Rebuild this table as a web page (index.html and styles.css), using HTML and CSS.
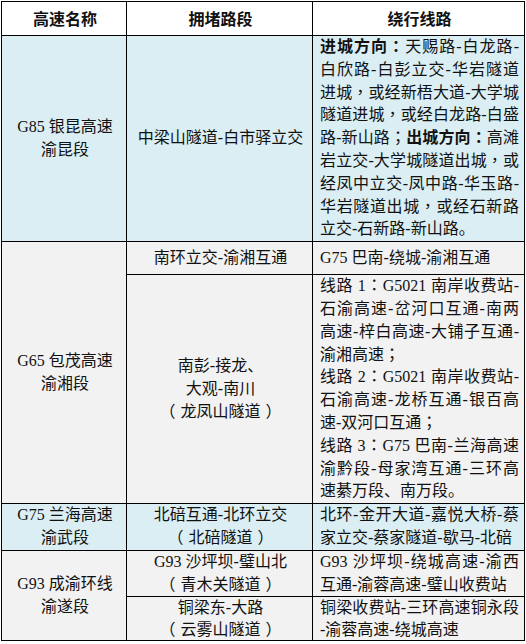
FILE: index.html
```html
<!DOCTYPE html>
<html lang="zh-CN">
<head>
<meta charset="utf-8">
<title>绕行线路</title>
<link rel="stylesheet" href="styles.css">
</head>
<body>
<table class="roads">
  <colgroup><col class="c1"><col class="c2"><col class="c3"></colgroup>
  <thead>
    <tr class="head"><th>高速名称</th><th>拥堵路段</th><th>绕行线路</th></tr>
  </thead>
  <tbody>
    <tr class="blue">
      <td class="name">G85 银昆高速<br>渝昆段</td>
      <td class="seg">中梁山隧道-白市驿立交</td>
      <td class="route">
        <span class="ln j"><b>进城方向<span class="p" lang="zh-TW">：</span></b>天赐路-白龙路-</span>
        <span class="ln j">白欣路-白彭立交-华岩隧道</span>
        <span class="ln j">进城<span class="p" lang="zh-TW">，</span>或经新梧大道-大学城</span>
        <span class="ln j">隧道进城<span class="p" lang="zh-TW">，</span>或经白龙路-白盛</span>
        <span class="ln j">路-新山路<span class="p" lang="zh-TW">；</span><b>出城方向<span class="p" lang="zh-TW">：</span></b>高滩</span>
        <span class="ln j">岩立交-大学城隧道出城<span class="p" lang="zh-TW">，</span>或</span>
        <span class="ln j">经凤中立交-凤中路-华玉路-</span>
        <span class="ln j">华岩隧道出城<span class="p" lang="zh-TW">，</span>或经石新路</span>
        <span class="ln">立交-石新路-新山路。</span>
      </td>
    </tr>
    <tr class="gray one">
      <td class="name" rowspan="2">G65 包茂高速<br>渝湘段</td>
      <td class="seg">南环立交-渝湘互通</td>
      <td class="route"><span class="ln">G75 巴南-绕城-渝湘互通</span></td>
    </tr>
    <tr class="gray">
      <td class="seg">南彭-接龙、<br>大观-南川<br><span class="op">（</span>龙凤山隧道<span class="cp">）</span></td>
      <td class="route">
        <span class="ln j">线路 1<span class="p" lang="zh-TW">：</span>G5021 南岸收费站-</span>
        <span class="ln j">石渝高速-岔河口互通-南两</span>
        <span class="ln j">高速-梓白高速-大铺子互通-</span>
        <span class="ln">渝湘高速<span class="p" lang="zh-TW">；</span></span>
        <span class="ln j">线路 2<span class="p" lang="zh-TW">：</span>G5021 南岸收费站-</span>
        <span class="ln j">石渝高速-龙桥互通-银百高</span>
        <span class="ln">速-双河口互通<span class="p" lang="zh-TW">；</span></span>
        <span class="ln j">线路 3<span class="p" lang="zh-TW">：</span>G75 巴南-兰海高速</span>
        <span class="ln j">渝黔段-母家湾互通-三环高</span>
        <span class="ln">速綦万段、南万段。</span>
      </td>
    </tr>
    <tr class="blue">
      <td class="name">G75 兰海高速<br>渝武段</td>
      <td class="seg">北碚互通-北环立交<br><span class="op">（</span>北碚隧道<span class="cp">）</span></td>
      <td class="route">
        <span class="ln j">北环-金开大道-嘉悦大桥-蔡</span>
        <span class="ln">家立交-蔡家隧道-歇马-北碚</span>
      </td>
    </tr>
    <tr class="gray">
      <td class="name" rowspan="2">G93 成渝环线<br>渝遂段</td>
      <td class="seg">G93 沙坪坝-璧山北<br><span class="op">（</span>青木关隧道<span class="cp">）</span></td>
      <td class="route">
        <span class="ln j">G93 沙坪坝-绕城高速-渝西</span>
        <span class="ln">互通-渝蓉高速-璧山收费站</span>
      </td>
    </tr>
    <tr class="gray last">
      <td class="seg">铜梁东-大路<br><span class="op">（</span>云雾山隧道<span class="cp">）</span></td>
      <td class="route">
        <span class="ln j">铜梁收费站-三环高速铜永段</span>
        <span class="ln">-渝蓉高速-绕城高速</span>
      </td>
    </tr>
  </tbody>
</table>
</body>
</html>
```

FILE: styles.css
```css
html, body {
  margin: 0;
  background: #ffffff;
}

body {
  padding: 1px 0 0 1px;
}

.roads {
  border-collapse: collapse;
  table-layout: fixed;
  width: 523px;
  font-family: "Liberation Serif", "Noto Sans CJK SC", serif;
  font-size: 16px;
  line-height: 22.8px;
  color: #111111;
  text-spacing-trim: space-all;
}

.c1 { width: 125px; }
.c2 { width: 186px; }
.c3 { width: 212px; }

.roads th,
.roads td {
  border: 1px solid #000000;
  padding: 0 5px 0 7px;
  vertical-align: middle;
}

.roads th {
  font-weight: bold;
  text-align: center;
  font-family: "Noto Sans CJK SC", sans-serif;
}

.head th {
  height: 33px;
  background: #ffffff;
}

.blue td { background: #daeef3; }
.gray td { background: #f2f2f2; }

.one td { height: 32px; }

.last td { line-height: 21.5px; }

.name,
.seg {
  text-align: center;
}

.route {
  text-align: left;
}

.ln {
  display: block;
  white-space: nowrap;
}

.ln.j {
  white-space: normal;
  text-align: justify;
  text-align-last: justify;
}

.p {
  font-family: "Noto Sans CJK TC", sans-serif;
  line-height: 0;
}

.op {
  padding: 0 5px 0 3px;
}

.cp {
  padding: 0 3px 0 5px;
}

b {
  font-family: "Noto Sans CJK SC", sans-serif;
  font-weight: bold;
  line-height: 0;
}
```
